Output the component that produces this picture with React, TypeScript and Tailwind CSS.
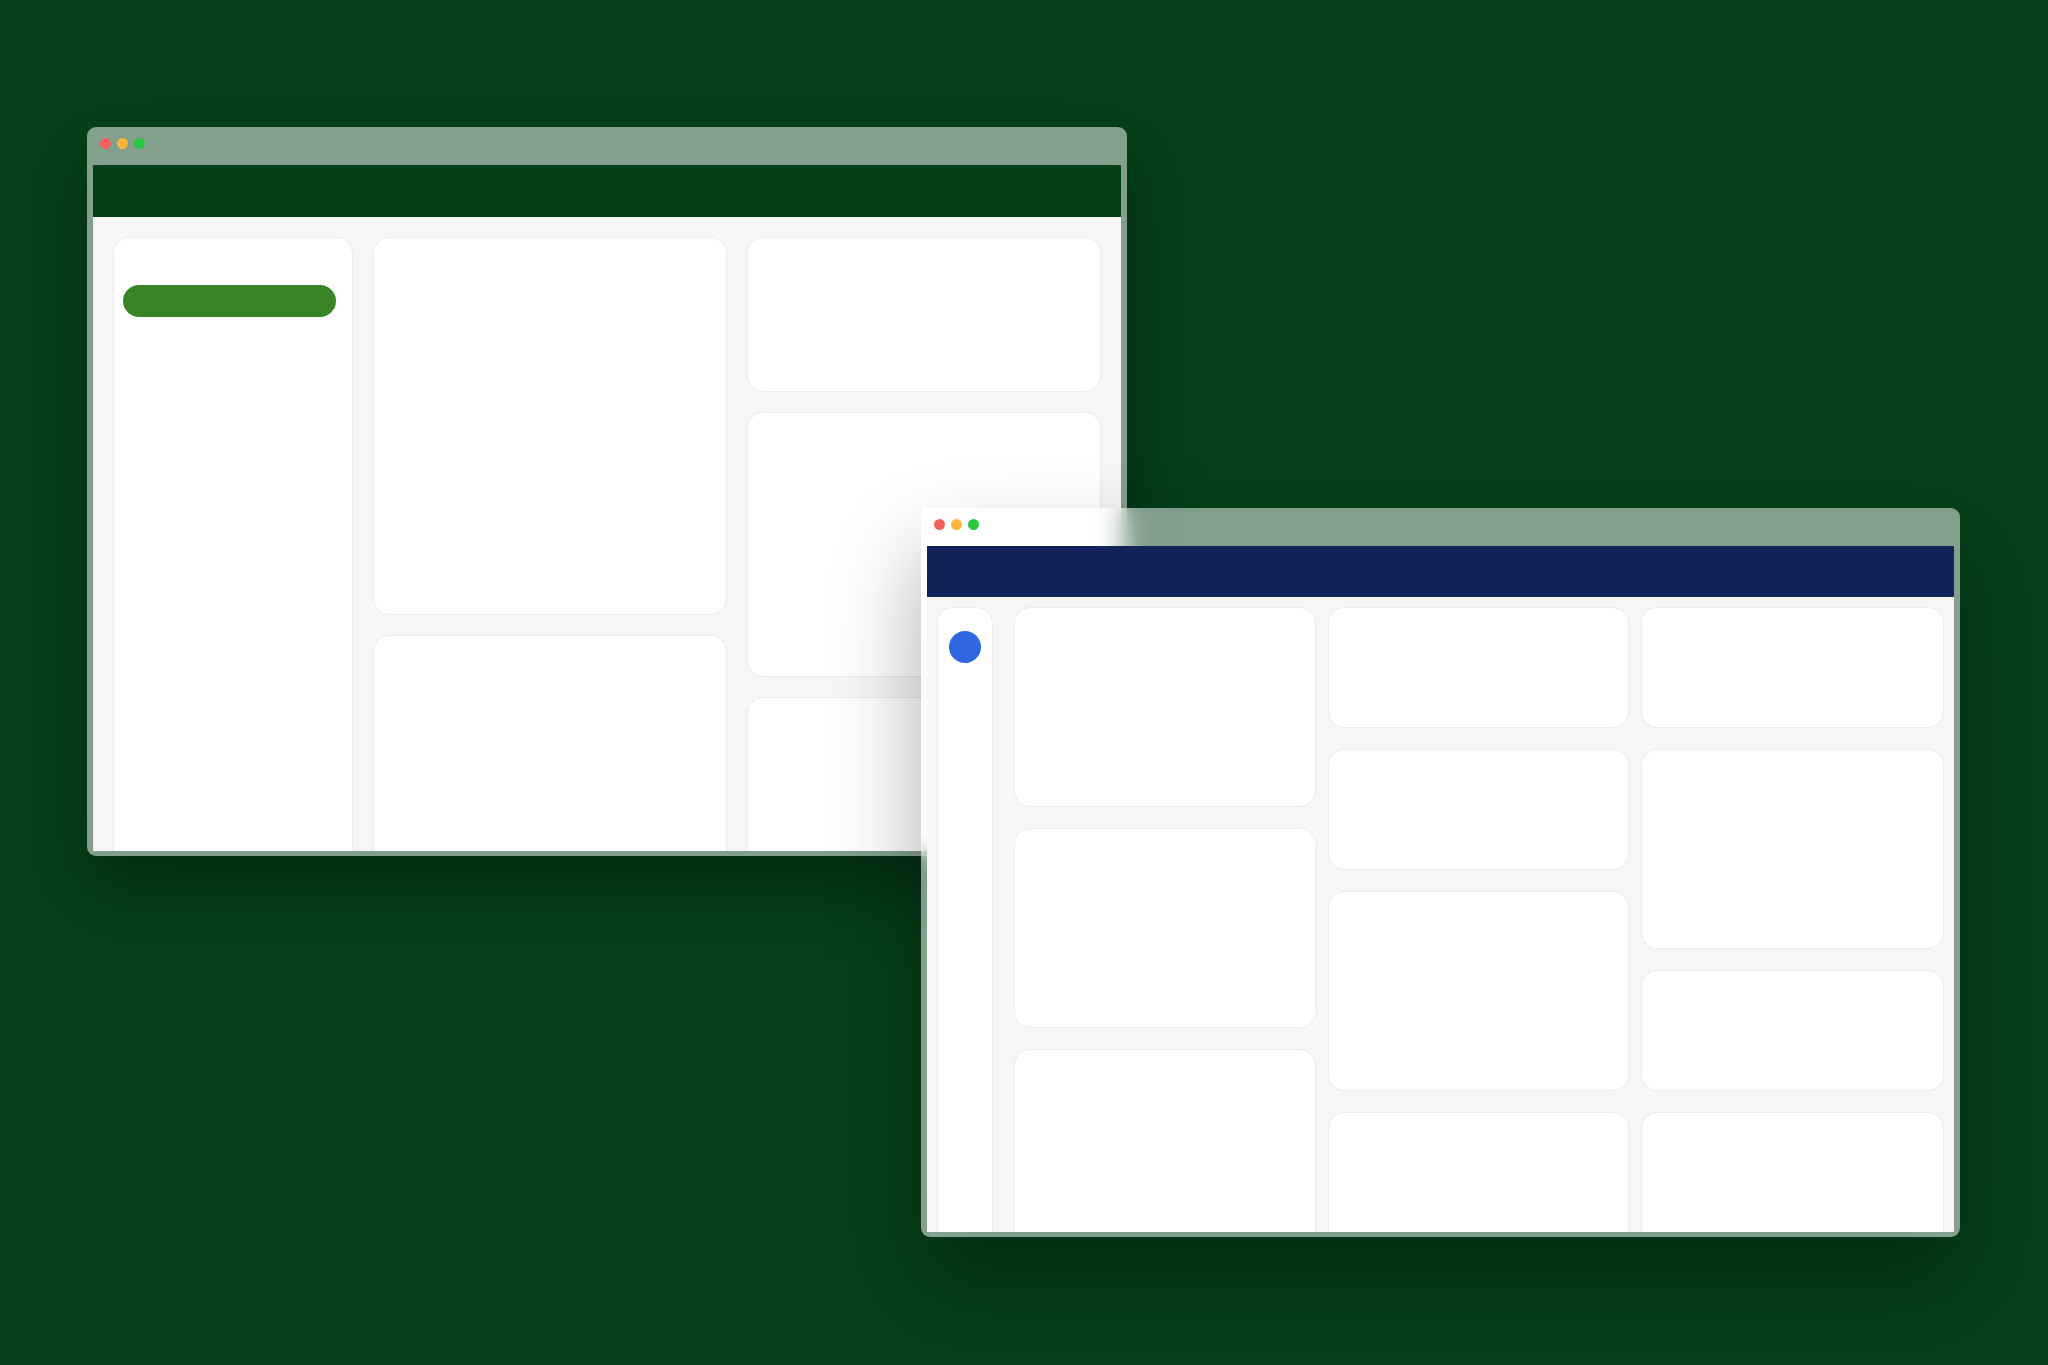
import React from 'react';

function Dots() {
  return (
    <div className="flex items-start gap-[6px] pl-[13px] pt-[11px] h-[38px] shrink-0">
      <span className="w-[11px] h-[11px] rounded-full bg-[#f2605a]" />
      <span className="w-[11px] h-[11px] rounded-full bg-[#f8b73c]" />
      <span className="w-[11px] h-[11px] rounded-full bg-[#2bc643]" />
    </div>
  );
}

function Card({ className = '', children }: { className?: string; children?: React.ReactNode }) {
  return (
    <div className={`bg-white border border-[#eeece9] rounded-2xl shrink-0 ${className}`}>{children}</div>
  );
}

function BackWindow() {
  return (
    <div className="absolute left-[87px] top-[127px] w-[1040px] h-[729px] rounded-[9px] bg-white/50 backdrop-blur-md shadow-[0_30px_70px_rgba(0,0,0,0.35)] flex flex-col overflow-hidden">
      <Dots />
      <div className="flex-1 mx-[6px] mb-[5px] flex flex-col overflow-hidden">
        <div className="h-[52px] bg-[#053f18] shrink-0" />
        <div className="flex-1 bg-[#f7f6f4] pt-[20px] px-[20px] flex gap-[20px] overflow-hidden">
          <Card className="w-[240px] h-[700px] pt-[47px] pl-[9px]">
            <div className="w-[213px] h-[32px] rounded-full bg-[#3a8428]" />
          </Card>
          <div className="w-[354px] flex flex-col gap-[20px]">
            <Card className="h-[378px]" />
            <Card className="h-[400px]" />
          </div>
          <div className="w-[354px] flex flex-col gap-[20px]">
            <Card className="h-[155px]" />
            <Card className="h-[265px]" />
            <Card className="h-[300px]" />
          </div>
        </div>
      </div>
    </div>
  );
}

function FrontWindow() {
  return (
    <div className="absolute left-[921px] top-[508px] w-[1039px] h-[729px] rounded-[9px] bg-white/50 backdrop-blur-md shadow-[0_45px_90px_rgba(0,0,0,0.32)] flex flex-col overflow-hidden">
      <Dots />
      <div className="flex-1 mx-[6px] mb-[5px] flex flex-col overflow-hidden">
        <div className="h-[51px] bg-[#14225a] shrink-0" />
        <div className="flex-1 bg-[#f7f6f4] pt-[10px] px-[10px] flex overflow-hidden">
          <Card className="w-[56px] h-[700px] pt-[23px] flex flex-col items-center">
            <div className="w-[32px] h-[32px] rounded-full bg-[#2f67e0]" />
          </Card>
          <div className="w-[302px] ml-[21px] flex flex-col gap-[21px]">
            <Card className="h-[200px]" />
            <Card className="h-[200px]" />
            <Card className="h-[300px]" />
          </div>
          <div className="w-[301px] ml-[12px] flex flex-col gap-[21px]">
            <Card className="h-[121px]" />
            <Card className="h-[121px]" />
            <Card className="h-[200px]" />
            <Card className="h-[300px]" />
          </div>
          <div className="w-[303px] ml-[12px] flex flex-col gap-[21px]">
            <Card className="h-[121px]" />
            <Card className="h-[200px]" />
            <Card className="h-[121px]" />
            <Card className="h-[300px]" />
          </div>
        </div>
      </div>
    </div>
  );
}

export default function App() {
  return (
    <div className="relative w-[2048px] h-[1365px] bg-[#05411a] overflow-hidden">
      <BackWindow />
      <FrontWindow />
    </div>
  );
}
